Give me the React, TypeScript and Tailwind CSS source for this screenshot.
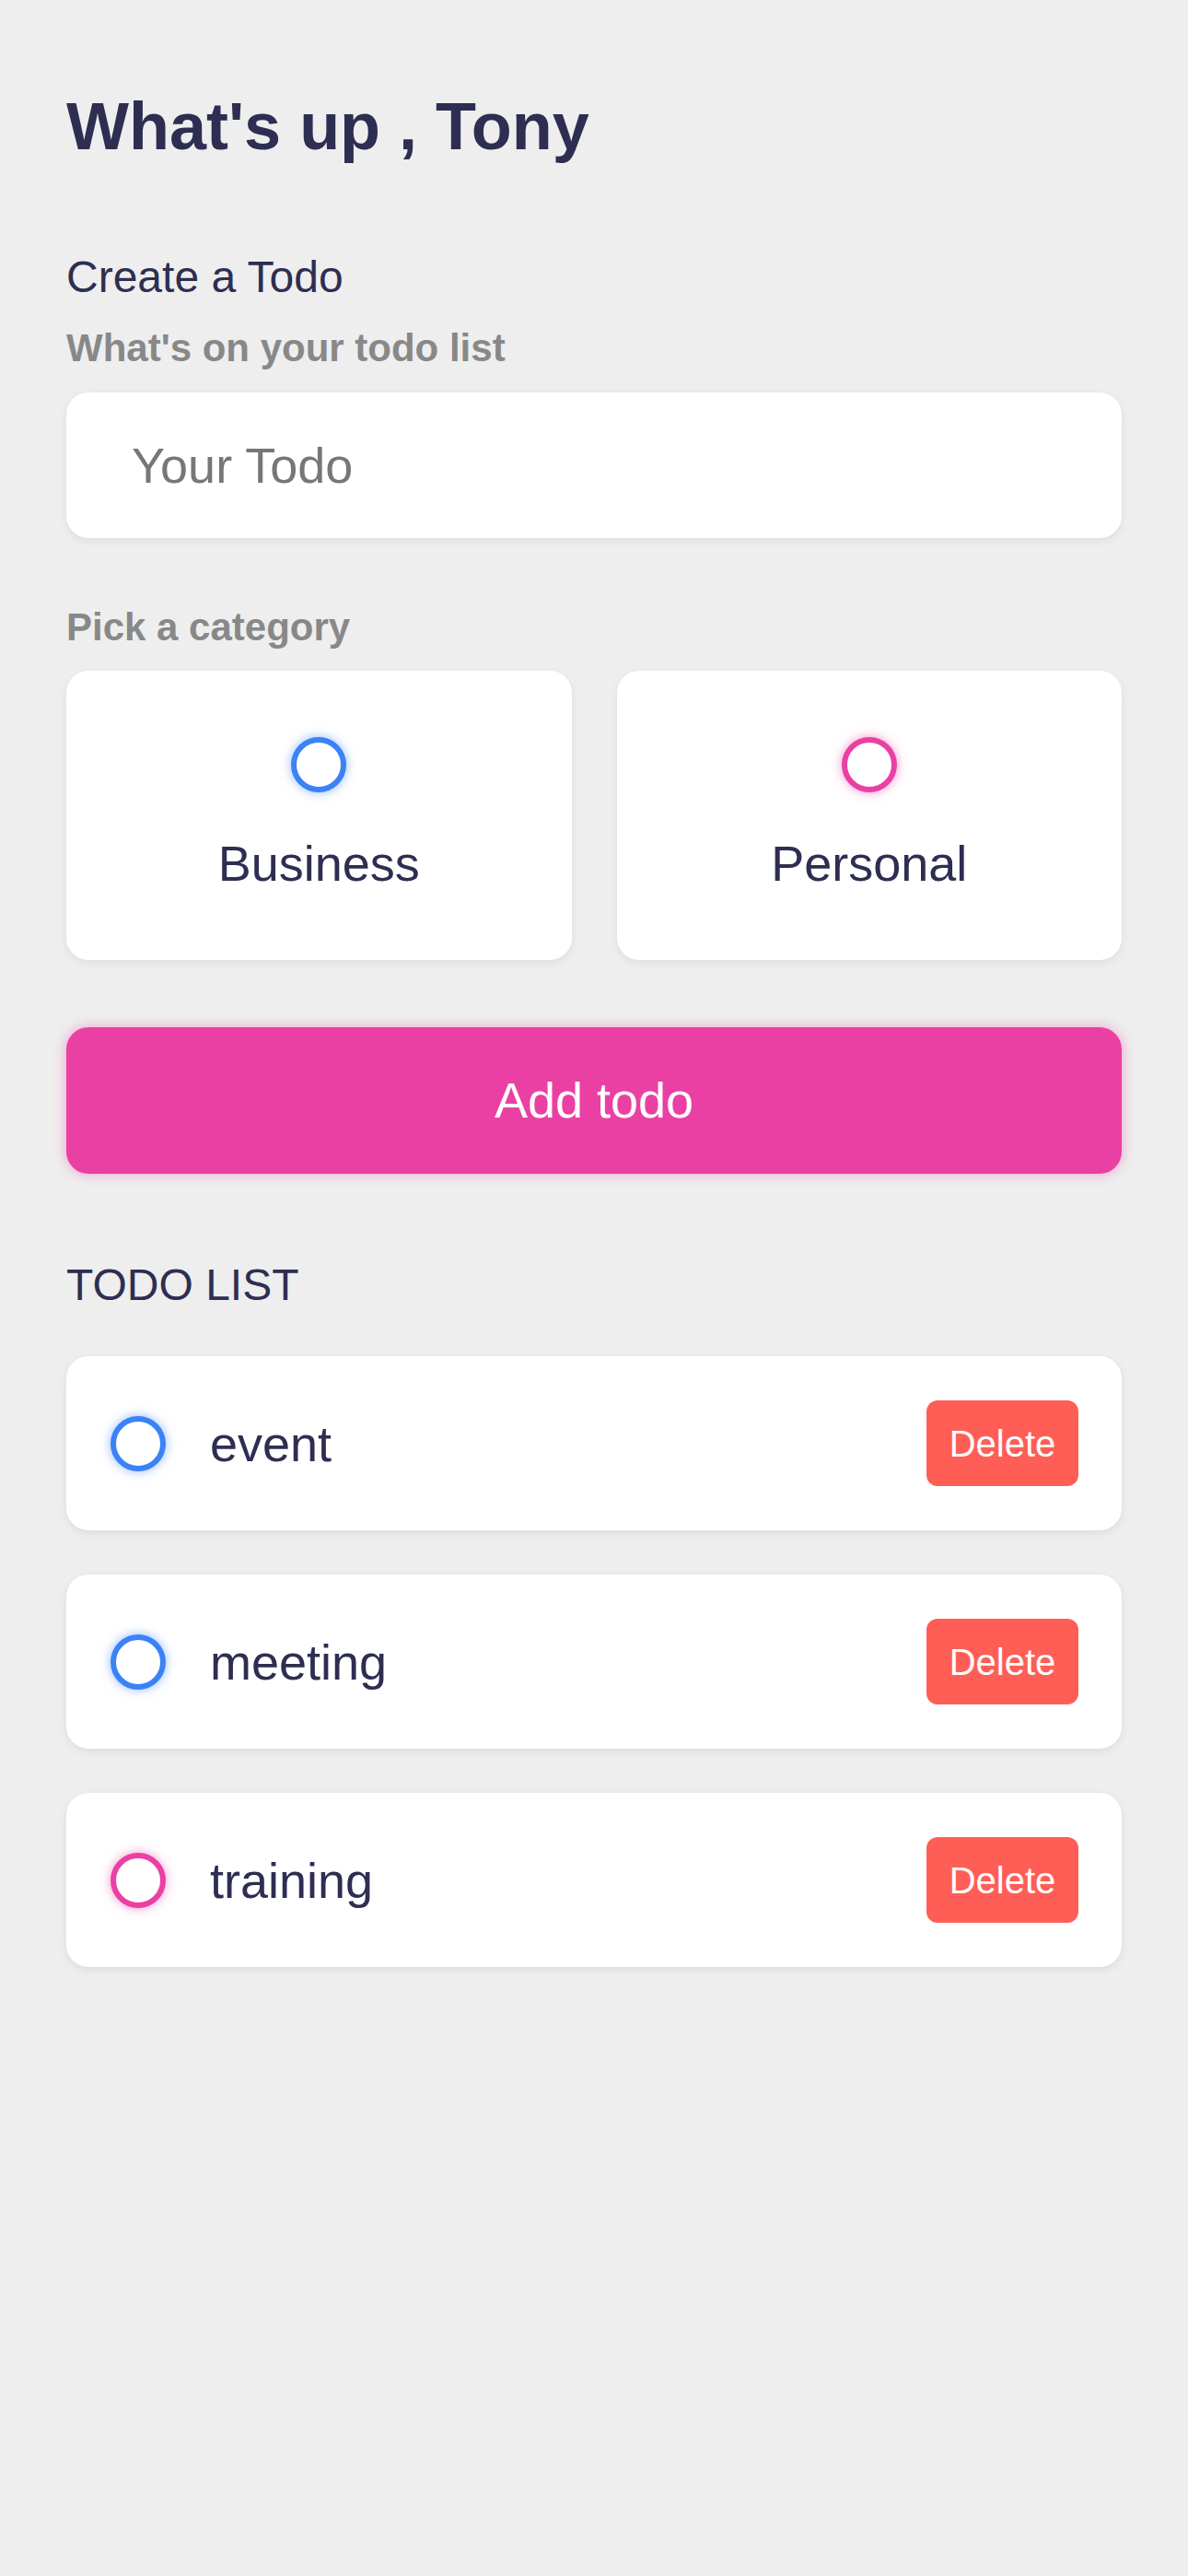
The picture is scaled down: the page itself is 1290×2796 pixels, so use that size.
import { useState } from 'react';

interface Todo {
    id: number;
    content: string;
    category: 'business' | 'personal';
    done: boolean;
}

const initialTodos: Todo[] = [
    { id: 1, content: 'event', category: 'business', done: false },
    { id: 2, content: 'meeting', category: 'business', done: false },
    { id: 3, content: 'training', category: 'personal', done: false },
];

function Bubble({ category }: { category: 'business' | 'personal' }) {
    return (
        <span
            className={`block w-[60px] h-[60px] rounded-full border-[6px] bg-white ${category === 'business'
                ? 'border-[#3b82f6] shadow-[0_0_12px_rgba(59,130,246,0.55)]'
                : 'border-[#ea40a4] shadow-[0_0_12px_rgba(234,64,164,0.55)]'
                }`}
        />
    );
}

export default function App() {
    const [todos, setTodos] = useState<Todo[]>(initialTodos);
    const [content, setContent] = useState('');
    const [category, setCategory] = useState<'business' | 'personal' | null>(null);

    const addTodo = (e: React.FormEvent) => {
        e.preventDefault();
        if (!content.trim() || !category) return;
        setTodos(prev => [...prev, { id: Date.now(), content, category, done: false }]);
        setContent('');
        setCategory(null);
    };

    const removeTodo = (id: number) => {
        setTodos(todos.filter(todo => todo.id !== id));
    };

    return (
        <div className="min-h-screen w-full bg-[#eeeeee] font-['Liberation_Sans',Arial,sans-serif] text-[#2e2e52]">
            <div className="flex flex-col px-[72px] pt-[101px] pb-[72px]">
                {/* Greeting */}
                <h1 className="text-[72px] leading-none font-bold">What's up , Tony</h1>

                {/* Create todo */}
                <form onSubmit={addTodo} className="flex flex-col">
                    <h3 className="mt-[104px] text-[48px] leading-none">Create a Todo</h3>
                    <h4 className="mt-[32px] text-[42px] leading-none font-bold text-[#888888]">What's on your todo list</h4>
                    <input
                        type="text"
                        placeholder="Your Todo"
                        value={content}
                        onChange={e => setContent(e.target.value)}
                        className="mt-[27px] h-[158px] w-full rounded-[24px] bg-white px-[71px] text-[54px] text-[#2e2e52]
                        placeholder:text-[#777777] outline-none shadow-[0_3px_10px_rgba(0,0,0,0.07)]"
                    />

                    <h4 className="mt-[76px] text-[42px] leading-none font-bold text-[#888888]">Pick a category</h4>
                    <div className="mt-[26px] grid grid-cols-2 gap-[49px]">
                        {(['business', 'personal'] as const).map(cat => (
                            <label
                                key={cat}
                                onClick={() => setCategory(cat)}
                                className="flex h-[314px] flex-col items-center rounded-[24px] bg-white pt-[72px]
                                shadow-[0_3px_10px_rgba(0,0,0,0.07)] cursor-pointer"
                            >
                                <Bubble category={cat} />
                                <span className="mt-[50px] text-[54px] leading-none">
                                    {cat === 'business' ? 'Business' : 'Personal'}
                                </span>
                            </label>
                        ))}
                    </div>

                    <button
                        type="submit"
                        className="mt-[73px] h-[159px] w-full rounded-[24px] bg-[#ea40a4] text-[54px] text-white
                        shadow-[0_0_14px_rgba(234,64,164,0.45)]"
                    >
                        Add todo
                    </button>
                </form>

                {/* Todo list */}
                <h3 className="mt-[97px] text-[48px] leading-none">TODO LIST</h3>
                <div className="mt-[53px] flex flex-col gap-[48px]">
                    {todos.map(todo => (
                        <div
                            key={todo.id}
                            className="flex h-[189px] items-center rounded-[24px] bg-white pl-[48px] pr-[47px]
                            shadow-[0_3px_10px_rgba(0,0,0,0.08)]"
                        >
                            <Bubble category={todo.category} />
                            <span className="ml-[48px] flex-1 text-[54px] leading-none">{todo.content}</span>
                            <button
                                onClick={() => removeTodo(todo.id)}
                                className="h-[93px] w-[165px] rounded-[12px] bg-[#ff5e57] text-[40px] text-white"
                            >
                                Delete
                            </button>
                        </div>
                    ))}
                </div>
            </div>
        </div>
    );
}
